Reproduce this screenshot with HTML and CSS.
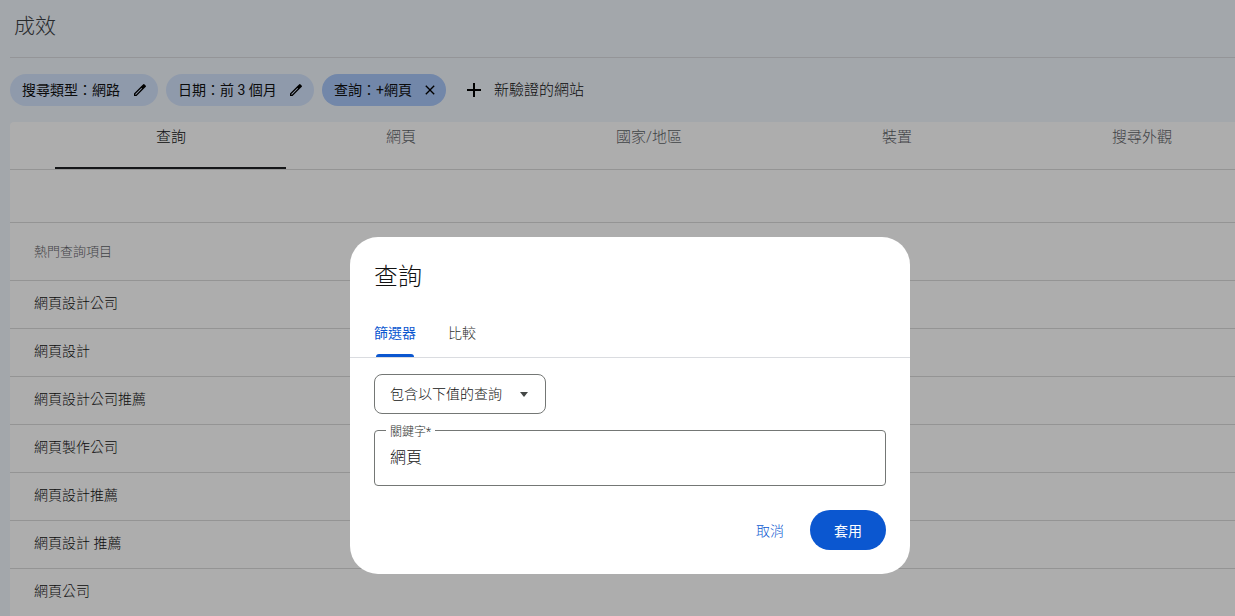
FILE: index.html
```html
<!DOCTYPE html>
<html lang="zh-Hant">
<head>
	<meta charset="utf-8">
	<meta name="viewport" content="width=device-width, initial-scale=1">
	<title>成效</title>
	<link rel="stylesheet" href="styles.css">
</head>
<body>
	<div class="page">
		<header class="header">
			<h1>成效</h1>
		</header>

		<div class="filters">
			<button type="button" class="chip">
				搜尋類型：網路
				<svg class="icon" viewBox="0 0 24 24"><path d="M3 17.2V21h3.8L18 9.8 14.2 6 3 17.2zM6 19H5v-1l9.1-9.1 1 1L6 19zM20.7 7a1 1 0 0 0 0-1.4l-2.3-2.3a1 1 0 0 0-1.4 0L14.2 6 18 9.8 20.7 7z"/></svg>
			</button>
			<button type="button" class="chip">
				日期：前 3 個月
				<svg class="icon" viewBox="0 0 24 24"><path d="M3 17.2V21h3.8L18 9.8 14.2 6 3 17.2zM6 19H5v-1l9.1-9.1 1 1L6 19zM20.7 7a1 1 0 0 0 0-1.4l-2.3-2.3a1 1 0 0 0-1.4 0L14.2 6 18 9.8 20.7 7z"/></svg>
			</button>
			<button type="button" class="chip chip-active">
				查詢：+網頁
				<svg class="icon" viewBox="0 0 24 24"><path d="M19 6.4 17.6 5 12 10.6 6.4 5 5 6.4l5.6 5.6L5 17.6 6.4 19l5.6-5.6 5.6 5.6 1.4-1.4-5.6-5.6z"/></svg>
			</button>
			<button type="button" class="add">
				<svg class="icon-add" viewBox="0 0 24 24"><path d="M19 13h-6v6h-2v-6H5v-2h6V5h2v6h6v2z"/></svg>
				新驗證的網站
			</button>
		</div>

		<div class="panel">
			<nav class="tabs">
				<a href="#" class="current">查詢</a>
				<a href="#">網頁</a>
				<a href="#">國家/地區</a>
				<a href="#">裝置</a>
				<a href="#">搜尋外觀</a>
			</nav>
			<div class="toolbar"></div>
			<table class="queries">
				<thead>
					<tr><th scope="col">熱門查詢項目</th></tr>
				</thead>
				<tbody>
					<tr><td>網頁設計公司</td></tr>
					<tr><td>網頁設計</td></tr>
					<tr><td>網頁設計公司推薦</td></tr>
					<tr><td>網頁製作公司</td></tr>
					<tr><td>網頁設計推薦</td></tr>
					<tr><td>網頁設計 推薦</td></tr>
					<tr><td>網頁公司</td></tr>
				</tbody>
			</table>
		</div>
	</div>

	<div class="overlay">
		<form class="dialog" role="dialog" aria-modal="true" aria-labelledby="dialog-title">
			<h2 id="dialog-title">查詢</h2>
			<div class="dialog-tabs">
				<a href="#" class="current">篩選器</a>
				<a href="#">比較</a>
			</div>
			<div class="dialog-body">
				<div class="select">
					<select aria-label="篩選條件">
						<option>包含以下值的查詢</option>
					</select>
					<svg class="arrow" viewBox="0 0 10 5"><path d="M1 0h8L5 5z"/></svg>
				</div>
				<div class="field">
					<label for="keyword">關鍵字*</label>
					<input type="text" id="keyword" value="網頁">
				</div>
			</div>
			<div class="actions">
				<button type="button" class="cancel">取消</button>
				<button type="submit" class="apply">套用</button>
			</div>
		</form>
	</div>
</body>
</html>
```

FILE: styles.css
```css
* {
	box-sizing: border-box;
}

body {
	margin: 0;
	height: 100vh;
	overflow: hidden;
	background: #f0f6fd;
	color: #111;
	font-family: Roboto, "Noto Sans CJK TC", sans-serif;
	font-weight: 300;
	font-size: 14px;
	line-height: 20px;
}

button, input, select {
	margin: 0;
	border: 0;
	background: none;
	color: inherit;
	font: inherit;
}

a {
	color: inherit;
	text-decoration: none;
}

.page {
	padding-left: 10px;
}

.header {
	height: 58px;
	padding: 12px 4px;
	border-bottom: 1px solid #dadce0;
}

.header h1 {
	margin: 0;
	color: #3c4043;
	font-weight: 300;
	font-size: 21px;
	line-height: 28px;
}

/* filter chips */

.filters {
	display: flex;
	gap: 8px;
	padding: 16px 0;
}

.chip {
	display: flex;
	align-items: center;
	justify-content: space-between;
	width: 148px;
	height: 32px;
	padding: 0 10px 0 12px;
	border-radius: 16px;
	background: #d3e3fd;
	font-weight: 400;
	white-space: nowrap;
}

.chip-active {
	width: 124px;
	padding-right: 8px;
	background: #a8c7fa;
}

.icon {
	width: 16px;
	height: 16px;
}

.icon-add {
	width: 24px;
	height: 24px;
}

.add {
	display: flex;
	align-items: center;
	gap: 8px;
	padding: 0 8px;
	font-size: 15px;
}

/* results */

.panel {
	overflow: hidden;
	border-top-left-radius: 4px;
	background: #fff;
}

.tabs {
	display: flex;
	height: 48px;
	padding-left: 45px;
	border-bottom: 1px solid #dadada;
	color: #5f6368;
	font-size: 15px;
}

.tabs a {
	flex: none;
	padding: 5px 100px 0;
}

.tabs .current {
	padding-left: 101px;
	border-bottom: 2px solid #202124;
	color: #111;
}

.toolbar {
	height: 53px;
	border-bottom: 1px solid #dadada;
}

.queries {
	width: 100%;
	border-spacing: 0;
}

.queries th,
.queries td {
	height: 48px;
	padding: 0 24px 4px;
	border-bottom: 1px solid #dadada;
	text-align: left;
}

.queries th {
	height: 58px;
	padding-bottom: 0;
	color: #5f6368;
	font-weight: 300;
	font-size: 13px;
}

/* dialog */

.overlay {
	position: fixed;
	inset: 0;
	display: flex;
	align-items: flex-start;
	justify-content: center;
	padding: 237px 0 0 25px;
	background: rgba(0, 0, 0, 0.32);
}

.dialog {
	width: 560px;
	border-radius: 28px;
	background: #fff;
}

.dialog h2 {
	margin: 0;
	padding: 24px 24px 16px;
	font-weight: 300;
	font-size: 24px;
	line-height: 32px;
}

.dialog-tabs {
	display: flex;
	gap: 32px;
	height: 49px;
	padding: 0 24px;
	border-bottom: 1px solid #dadce0;
	color: #303331;
	line-height: 48px;
}

.dialog-tabs .current {
	position: relative;
	color: #0b57d0;
	font-weight: 400;
}

.dialog-tabs .current::after {
	content: "";
	position: absolute;
	right: 2px;
	bottom: 0;
	left: 2px;
	height: 3px;
	border-radius: 3px 3px 0 0;
	background: #0b57d0;
}

.dialog-body {
	display: grid;
	gap: 16px;
	padding: 16px 24px 24px;
}

.select {
	position: relative;
	width: 172px;
}

.select select {
	display: block;
	width: 100%;
	height: 40px;
	padding: 0 15px;
	border: 1px solid #747775;
	border-radius: 8px;
	appearance: none;
}

.arrow {
	position: absolute;
	top: 18px;
	right: 17px;
	width: 10px;
	height: 5px;
	fill: #444746;
	pointer-events: none;
}

.field {
	position: relative;
}

.field label {
	position: absolute;
	top: -6px;
	left: 12px;
	padding: 0 4px;
	background: #fff;
	color: #303331;
	font-size: 12px;
	line-height: 16px;
}

.field input {
	display: block;
	width: 100%;
	height: 56px;
	padding: 0 15px 4px;
	border: 1px solid #747775;
	border-radius: 4px;
	font-size: 16px;
}

.actions {
	display: flex;
	justify-content: flex-end;
	gap: 14px;
	padding: 0 24px 24px;
}

.actions button {
	height: 40px;
	padding: 2px 12px 0;
	border-radius: 20px;
}

.cancel {
	color: #0b57d0;
}

.actions .apply {
	padding: 2px 24px 0;
	background: #0b57d0;
	color: #fff;
	font-weight: 400;
}
```
